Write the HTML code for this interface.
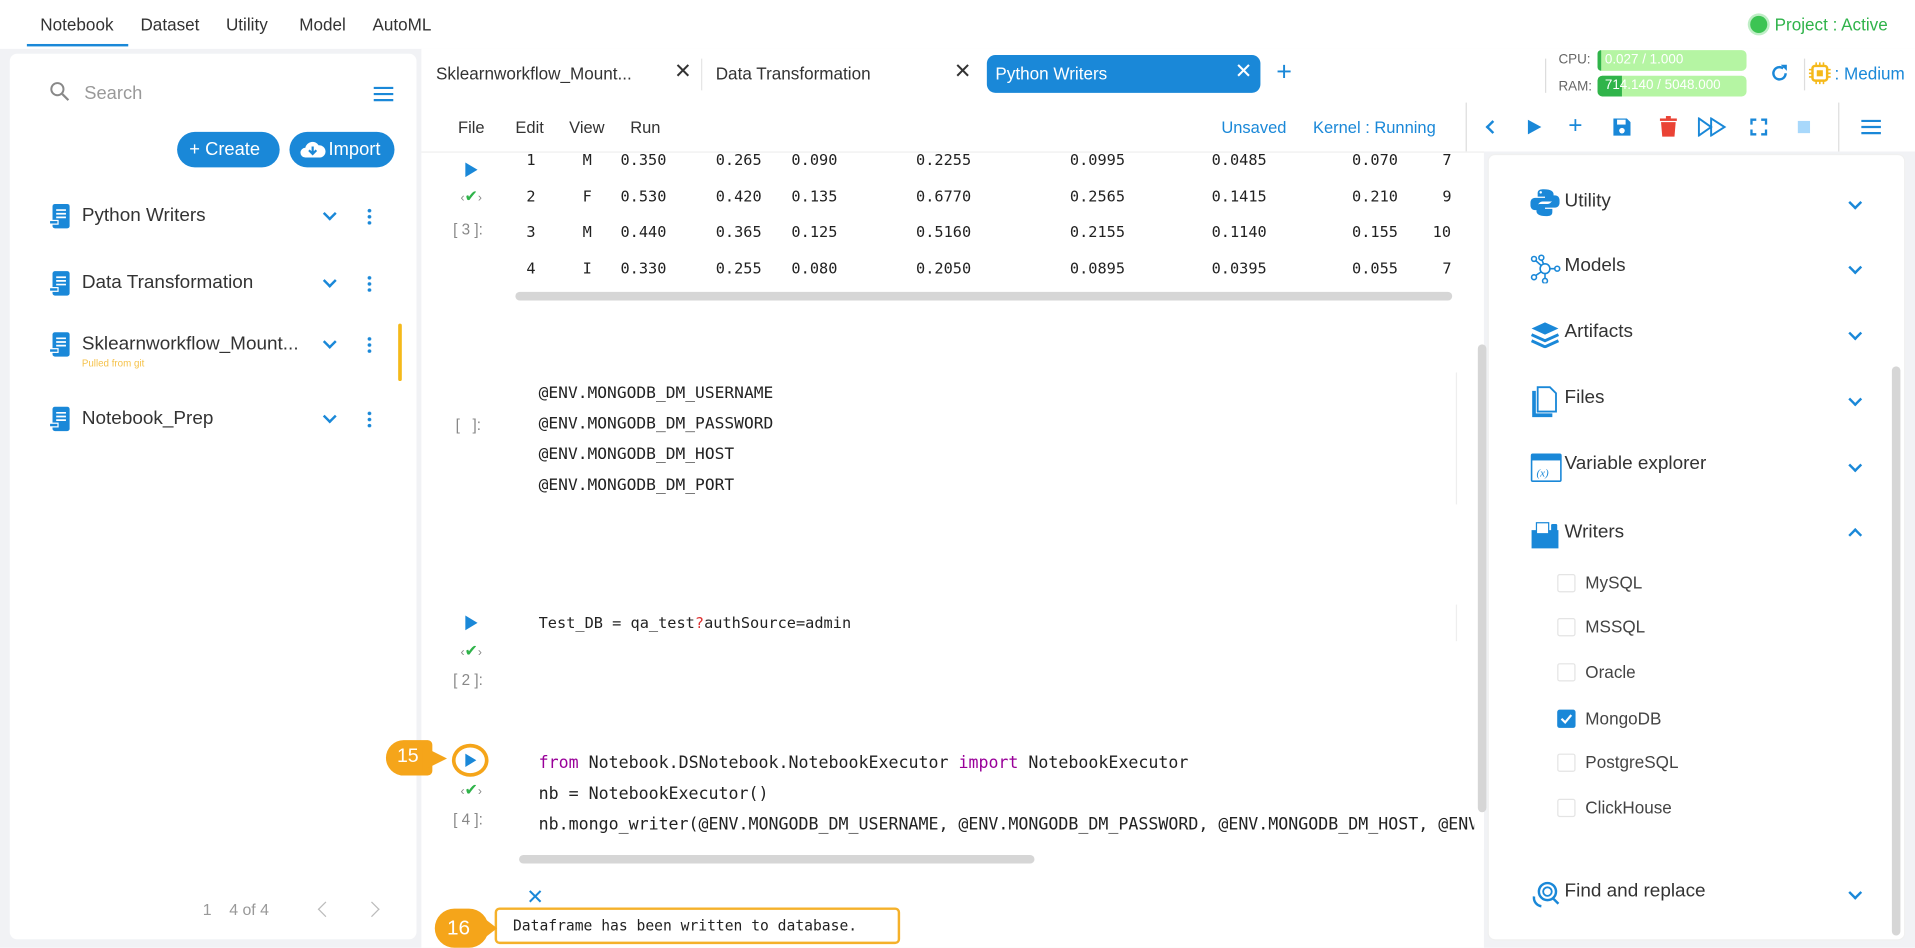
<!DOCTYPE html>
<html><head><meta charset="utf-8"><style>
*{box-sizing:border-box;margin:0;padding:0}
html,body{width:1915px;height:948px;overflow:hidden;background:#fff}
#s{position:absolute;left:0;top:0;width:1568px;height:776px;transform:scale(1.22135);transform-origin:0 0;background:#f1f2f5;font-family:"Liberation Sans",sans-serif;color:#333}
.a{position:absolute;white-space:nowrap}
.m{font-family:"DejaVu Sans Mono","Liberation Mono",monospace;font-size:12.5px;color:#222}
.blue{color:#1a88d8}
.chev{width:8px;height:8px;border-right:2px solid #1a88d8;border-bottom:2px solid #1a88d8;transform:rotate(45deg)}
.dots{width:3px;height:14px;background:radial-gradient(circle,#1a88d8 1.4px,transparent 1.6px) 0 0/3px 5px repeat-y}
.cb{width:15px;height:15px;border:1px solid #e4e4e4;border-radius:2px}
</style></head><body><div id="s">
<div class="a" style="left:0;top:0;width:1568px;height:40px;background:#fff"></div>
<div class="a" style="left:33px;top:12px;font-size:14px">Notebook</div>
<div class="a" style="left:115px;top:12px;font-size:14px">Dataset</div>
<div class="a" style="left:185px;top:12px;font-size:14px">Utility</div>
<div class="a" style="left:245px;top:12px;font-size:14px">Model</div>
<div class="a" style="left:305px;top:12px;font-size:14px">AutoML</div>
<div class="a" style="left:22px;top:36px;width:83px;height:2px;background:#1a88d8"></div>
<div class="a" style="left:1433px;top:13px;width:14px;height:14px;border-radius:50%;background:#3cc453;box-shadow:0 0 0 2px #bfeec6"></div>
<div class="a" style="left:1453px;top:12px;font-size:14px;color:#2fb34a">Project : Active</div>
<div class="a" style="left:8px;top:44px;width:333px;height:725px;background:#fff;border-radius:6px"></div>
<svg class="a" style="left:40px;top:66px" width="18" height="18"><circle cx="7" cy="7" r="5" fill="none" stroke="#888" stroke-width="1.6"/><line x1="11" y1="11" x2="16" y2="16" stroke="#888" stroke-width="1.8"/></svg>
<div class="a" style="left:69px;top:68px;font-size:15px;color:#999">Search</div>
<svg class="a" style="left:305px;top:70px" width="18" height="14"><path d="M1 2h16M1 7h16M1 12h16" stroke="#1a88d8" stroke-width="1.8"/></svg>
<div class="a" style="left:145px;top:108px;width:84px;height:29px;border-radius:15px;background:#1a88d8;color:#fff;font-size:15px;line-height:29px;padding-left:10px">+ Create</div>
<div class="a" style="left:237px;top:108px;width:86px;height:29px;border-radius:15px;background:#1a88d8;color:#fff;font-size:15px;line-height:29px;padding-left:32px">Import</div>
<svg class="a" style="left:245px;top:114px" width="22" height="17"><path d="M5 15a4 4 0 0 1 0-8a6 6 0 0 1 11-2a5 5 0 0 1 1 10z" fill="#fff"/><path d="M11 6v6M8 9l3 3l3-3" stroke="#1a88d8" stroke-width="1.8" fill="none"/></svg>
<div id="items"></div>
<div class="a" style="left:326px;top:265px;width:3px;height:47px;background:#f5b91a;border-radius:2px"></div>
<div class="a" style="left:166px;top:737px;font-size:13px;color:#999">1&nbsp;&nbsp;&nbsp;&nbsp;4 of 4</div>
<div class="a" style="left:262px;top:740px;width:9px;height:9px;border-left:1.5px solid #bbb;border-bottom:1.5px solid #bbb;transform:rotate(45deg)"></div>
<div class="a" style="left:300px;top:740px;width:9px;height:9px;border-right:1.5px solid #bbb;border-top:1.5px solid #bbb;transform:rotate(45deg)"></div>
<div class="a" style="left:345px;top:40px;width:870px;height:84px;background:#fff"></div>
<div class="a" style="left:357px;top:52px;font-size:14px">Sklearnworkflow_Mount...</div>
<div class="a" style="left:552px;top:49px;font-size:17px;color:#333">✕</div>
<div class="a" style="left:574px;top:48px;width:1px;height:26px;background:#e5e5e5"></div>
<div class="a" style="left:586px;top:52px;font-size:14px">Data Transformation</div>
<div class="a" style="left:781px;top:49px;font-size:17px">✕</div>
<div class="a" style="left:808px;top:45px;width:224px;height:31px;background:#1a88d8;border-radius:7px"></div>
<div class="a" style="left:815px;top:52px;font-size:14px;color:#fff">Python Writers</div>
<div class="a" style="left:1011px;top:49px;font-size:17px;color:#fff">✕</div>
<div class="a" style="left:1045px;top:46px;font-size:22px;color:#1a88d8">+</div>
<div class="a" style="left:375px;top:97px;font-size:13.5px">File</div>
<div class="a" style="left:422px;top:97px;font-size:13.5px">Edit</div>
<div class="a" style="left:466px;top:97px;font-size:13.5px">View</div>
<div class="a" style="left:516px;top:97px;font-size:13.5px">Run</div>
<div class="a blue" style="left:1000px;top:97px;font-size:13.5px">Unsaved</div>
<div class="a blue" style="left:1075px;top:97px;font-size:13.5px">Kernel : Running</div>
<div class="a" style="left:1200px;top:40px;width:368px;height:84px;background:#fff"></div>
<div class="a" style="left:1200px;top:84px;width:1px;height:40px;background:#ddd"></div>
<div class="a" style="left:1265px;top:48px;width:1px;height:28px;background:#ddd"></div>
<div class="a" style="left:1276px;top:43px;font-size:11px;color:#666">CPU:</div>
<div class="a" style="left:1276px;top:65px;font-size:11px;color:#666">RAM:</div>
<div class="a" style="left:1308px;top:41px;width:122px;height:17px;border-radius:4px;background:#b5f5a3"></div>
<div class="a" style="left:1308px;top:41px;width:3px;height:17px;border-radius:3px 0 0 3px;background:#30b44a"></div>
<div class="a" style="left:1314px;top:43px;font-size:11px;color:#fff">0.027 / 1.000</div>
<div class="a" style="left:1308px;top:62px;width:122px;height:17px;border-radius:4px;background:#b5f5a3"></div>
<div class="a" style="left:1308px;top:62px;width:20px;height:17px;border-radius:4px 0 0 4px;background:#30b44a"></div>
<div class="a" style="left:1314px;top:64px;font-size:11px;color:#fff">714.140 / 5048.000</div>
<svg class="a" style="left:1448px;top:51px" width="18" height="18"><path d="M14 9a5 5 0 1 1-2-4" fill="none" stroke="#1a88d8" stroke-width="2"/><path d="M10 2h5v5z" fill="#1a88d8"/></svg>
<div class="a" style="left:1477px;top:48px;width:1px;height:26px;background:#ddd"></div>
<svg class="a" style="left:1481px;top:51px" width="18" height="18"><rect x="3" y="3" width="12" height="12" rx="2" fill="none" stroke="#f5b91a" stroke-width="2"/><rect x="6.5" y="6.5" width="5" height="5" fill="#f5b91a"/><path d="M6 0v3M9 0v3M12 0v3M6 15v3M9 15v3M12 15v3M0 6h3M0 9h3M0 12h3M15 6h3M15 9h3M15 12h3" stroke="#f5b91a" stroke-width="1.3"/></svg>
<div class="a" style="left:1502px;top:52px;font-size:14px;color:#1a88d8">: Medium</div>
<div class="a" style="left:1218px;top:100px;width:8px;height:8px;border-left:2px solid #1a88d8;border-bottom:2px solid #1a88d8;transform:rotate(45deg)"></div>
<svg class="a" style="left:1249px;top:97px" width="14" height="14"><path d="M2 1l11 6l-11 6z" fill="#1a88d8"/></svg>
<div class="a" style="left:1284px;top:92px;font-size:20px;color:#1a88d8">+</div>
<svg class="a" style="left:1320px;top:96px" width="16" height="16"><path d="M1 1h11l3 3v11h-14z" fill="#1a88d8"/><rect x="4" y="2" width="7" height="4" fill="#fff"/><circle cx="8" cy="11" r="2.3" fill="#fff"/></svg>
<svg class="a" style="left:1359px;top:95px" width="14" height="17"><rect x="0" y="2" width="14" height="2" fill="#ea4335"/><rect x="5" y="0" width="4" height="2" fill="#ea4335"/><path d="M1 5h12l-1 12h-10z" fill="#ea4335"/></svg>
<svg class="a" style="left:1390px;top:96px" width="24" height="16"><path d="M1 1l10 7l-10 7zM11 1l11 7l-11 7z" fill="none" stroke="#1a88d8" stroke-width="1.6"/></svg>
<svg class="a" style="left:1433px;top:97px" width="14" height="14"><path d="M1 5V1h4M9 1h4v4M13 9v4h-4M5 13H1V9" fill="none" stroke="#1a88d8" stroke-width="2"/></svg>
<div class="a" style="left:1472px;top:99px;width:10px;height:10px;background:#a8d8fb"></div>
<div class="a" style="left:1505px;top:84px;width:1px;height:40px;background:#ddd"></div>
<svg class="a" style="left:1523px;top:97px" width="18" height="14"><path d="M1 2h16M1 7h16M1 12h16" stroke="#1a88d8" stroke-width="1.8"/></svg>
<div class="a" style="left:345px;top:124px;width:870px;height:652px;background:#fff"></div>
<div class="a" style="left:345px;top:124px;width:870px;height:1px;background:#eee"></div>
<svg class="a" style="left:380px;top:132px" width="12" height="14"><path d="M1 1l10 6l-10 6z" fill="#1a88d8"/></svg>
<div class="a" style="left:377px;top:153px;font-size:13px;color:#2fb34a"><span style="color:#888;font-size:10px">‹</span>✔<span style="color:#888;font-size:10px">›</span></div>
<div class="a" style="left:371px;top:181px;font-size:12.5px;color:#888">[ 3 ]:</div>
<div id="tbl"></div>
<div class="a" style="left:422px;top:239px;width:767px;height:7px;border-radius:4px;background:#d6d6d6"></div>
<div class="a" style="left:1192px;top:305px;width:1px;height:108px;background:#eee"></div>
<div class="a" style="left:373px;top:341px;font-size:12.5px;color:#888">[&nbsp;&nbsp;&nbsp;]:</div>
<div class="a m" style="left:441px;top:310px;line-height:25px;font-size:13.3px">@ENV.MONGODB_DM_USERNAME<br>@ENV.MONGODB_DM_PASSWORD<br>@ENV.MONGODB_DM_HOST<br>@ENV.MONGODB_DM_PORT</div>
<svg class="a" style="left:380px;top:503px" width="12" height="14"><path d="M1 1l10 6l-10 6z" fill="#1a88d8"/></svg>
<div class="a" style="left:377px;top:525px;font-size:13px;color:#2fb34a"><span style="color:#888;font-size:10px">‹</span>✔<span style="color:#888;font-size:10px">›</span></div>
<div class="a" style="left:371px;top:550px;font-size:12.5px;color:#888">[ 2 ]:</div>
<div class="a m" style="left:441px;top:502px">Test_DB = qa_test<span style="color:#d33">?</span>authSource=admin</div>
<div class="a" style="left:1192px;top:495px;width:1px;height:30px;background:#eee"></div>
<div class="a" style="left:370px;top:609px;width:30px;height:27px;border-radius:50%;border:3.5px solid #f5a51a;background:#fff"></div>
<svg class="a" style="left:380px;top:616px" width="11" height="13"><path d="M1 1l9 5.5l-9 5.5z" fill="#1a88d8"/></svg>
<div class="a" style="left:316px;top:606px;width:38px;height:29px;border-radius:15px 4px 4px 15px;background:#f5a51a"></div>
<div class="a" style="left:346px;top:611px;width:0;height:0;border-top:10px solid transparent;border-bottom:10px solid transparent;border-left:20px solid #f5a51a"></div>
<div class="a" style="left:325px;top:611px;font-size:16px;color:#fff">15</div>
<div class="a" style="left:377px;top:639px;font-size:13px;color:#2fb34a"><span style="color:#888;font-size:10px">‹</span>✔<span style="color:#888;font-size:10px">›</span></div>
<div class="a" style="left:371px;top:664px;font-size:12.5px;color:#888">[ 4 ]:</div>
<div class="a m" style="left:441px;top:613px;line-height:25px;font-size:13.6px"><span style="color:#909">from</span> Notebook.DSNotebook.NotebookExecutor <span style="color:#909">import</span> NotebookExecutor<br>nb = NotebookExecutor()<br>nb.mongo_writer(@ENV.MONGODB_DM_USERNAME, @ENV.MONGODB_DM_PASSWORD, @ENV.MONGODB_DM_HOST, @ENV</div>
<div class="a" style="left:1207px;top:600px;width:8px;height:95px;background:#fff"></div>
<div class="a" style="left:1210px;top:282px;width:7px;height:383px;border-radius:4px;background:#d6d6d6"></div>
<div class="a" style="left:425px;top:700px;width:422px;height:7px;border-radius:4px;background:#d6d6d6"></div>
<div class="a" style="left:431px;top:725px;font-size:17px;color:#1a88d8">✕</div>
<div class="a" style="left:405px;top:743px;width:332px;height:30px;border:2px solid #f5b12a;border-radius:4px;background:#fff"></div>
<div class="a m" style="left:420px;top:751px;font-size:12px">Dataframe has been written to database.</div>
<div class="a" style="left:356px;top:744px;width:44px;height:32px;border-radius:16px;background:#f5a51a"></div>
<div class="a" style="left:394px;top:750px;width:0;height:0;border-top:10px solid transparent;border-bottom:10px solid transparent;border-left:13px solid #f5a51a"></div>
<div class="a" style="left:366px;top:750px;font-size:17px;color:#fff">16</div>
<div class="a" style="left:1218px;top:126px;width:342px;height:644px;background:#fff;border-radius:6px;border:1px solid #f0f0f0"></div>
<div class="a" style="left:1549px;top:300px;width:7px;height:466px;background:#d6d6d6;border-radius:4px"></div>
<div id="rp"></div>
<svg class="a" style="left:1253px;top:154px" width="24" height="24"><path d="M11 1c-5 0-5 2-5 4v2h6v1H4c-3 0-4 2-4 5s1 5 4 5h2v-3c0-2 2-4 4-4h6c2 0 3-1 3-3V5c0-2-2-4-8-4z" fill="#1a88d8"/><path d="M13 23c5 0 5-2 5-4v-2h-6v-1h8c3 0 4-2 4-5s-1-5-4-5h-2v3c0 2-2 4-4 4H8c-2 0-3 1-3 3v3c0 2 2 4 8 4z" fill="#1a88d8"/><circle cx="8.5" cy="3.5" r="1" fill="#fff"/></svg>
<svg class="a" style="left:1252px;top:208px" width="26" height="24"><g fill="none" stroke="#1a88d8" stroke-width="1.3"><circle cx="13" cy="12" r="4"/><circle cx="4" cy="4" r="2"/><circle cx="10" cy="3" r="2"/><circle cx="23" cy="12" r="2"/><circle cx="4" cy="19" r="2"/><circle cx="13" cy="22" r="2"/><path d="M5.5 5.5l4.5 4M10.5 5l1.5 3.5M17 12h4M5.5 17.5l4.5-3M13 16v4"/></g></svg>
<svg class="a" style="left:1253px;top:263px" width="24" height="22"><path d="M12 1l11 5l-11 5l-11-5z" fill="#1a88d8"/><path d="M1 11l11 5l11-5M1 16l11 5l11-5" fill="none" stroke="#1a88d8" stroke-width="2.4"/></svg>
<svg class="a" style="left:1254px;top:316px" width="22" height="26"><path d="M2 4v20h15" fill="none" stroke="#1a88d8" stroke-width="3"/><path d="M5 1h10l5 5v15H5z" fill="#fff" stroke="#1a88d8" stroke-width="1.5"/></svg>
<svg class="a" style="left:1253px;top:371px" width="26" height="24"><rect x="1" y="1" width="24" height="22" rx="1" fill="#fff" stroke="#1a88d8" stroke-width="1.3"/><rect x="1" y="1" width="24" height="5" fill="#1a88d8"/><text x="5" y="19" font-size="9" font-style="italic" fill="#1a88d8" font-family="Liberation Serif">(x)</text></svg>
<svg class="a" style="left:1253px;top:426px" width="24" height="24"><path d="M1 8h22v15H1z" fill="#1a88d8"/><rect x="5" y="2" width="10" height="9" fill="#fff" stroke="#1a88d8"/><rect x="17" y="3" width="5" height="6" rx="1" fill="#1a88d8"/></svg>
<svg class="a" style="left:1254px;top:720px" width="24" height="24"><circle cx="13" cy="10" r="7" fill="none" stroke="#1a88d8" stroke-width="2"/><circle cx="13" cy="10" r="3.5" fill="none" stroke="#1a88d8" stroke-width="1.5"/><path d="M17 15l5 5M2 14a7 7 0 0 0 6 8" fill="none" stroke="#1a88d8" stroke-width="2"/></svg>
<div class="a" style="left:1275px;top:581px;width:15px;height:15px;border-radius:2px;background:#1a88d8"></div>
<svg class="a" style="left:1275px;top:581px" width="15" height="15"><path d="M3.5 7.5l3 3l5-6" fill="none" stroke="#fff" stroke-width="1.8"/></svg>
</div>
<script>
var h='';
[['Python Writers',177],['Data Transformation',232],['Sklearnworkflow_Mount...',282],['Notebook_Prep',343]].forEach(function(it){
var y=it[1];
h+='<svg class="a" style="left:40px;top:'+(y-11)+'px" width="18" height="22"><rect x="3" y="1" width="14" height="20" rx="2" fill="#1a88d8"/><path d="M6 6h8M6 9h8M6 12h8" stroke="#fff" stroke-width="1.4"/><rect x="0" y="14" width="8" height="4" fill="#fff"/><rect x="1" y="15" width="6" height="2" fill="#1a88d8"/></svg>';
h+='<div class="a" style="left:67px;top:'+(y-9)+'px;font-size:15.5px;color:#333">'+it[0]+'</div>';
h+='<div class="a chev" style="left:266px;top:'+(y-6)+'px"></div><div class="a dots" style="left:301px;top:'+(y-7)+'px"></div>';
});
h+='<div class="a" style="left:67px;top:293px;font-size:8px;color:#f5c24a">Pulled from git</div>';
document.getElementById('items').innerHTML=h;
var rows=[['1','M','0.350','0.265','0.090','0.2255','0.0995','0.0485','0.070','7'],['2','F','0.530','0.420','0.135','0.6770','0.2565','0.1415','0.210','9'],['3','M','0.440','0.365','0.125','0.5160','0.2155','0.1140','0.155','10'],['4','I','0.330','0.255','0.080','0.2050','0.0895','0.0395','0.055','7']];
var xs=[431,477,508,586,648,750,876,992,1107,1181],t='';
rows.forEach(function(r,i){r.forEach(function(c,j){var x=xs[j];if(j==9&&c.length>1)x-=8;t+='<div class="a m" style="left:'+x+'px;top:'+(123+i*29.5)+'px">'+c+'</div>';});});
document.getElementById('tbl').innerHTML=t;
var r='';
[['Utility',166,0],['Models',219,0],['Artifacts',273,0],['Files',327,0],['Variable explorer',381,0],['Writers',437,1],['Find and replace',731,0]].forEach(function(it){
r+='<div class="a" style="left:1281px;top:'+(it[1]-10)+'px;font-size:15.5px;color:#333">'+it[0]+'</div>';
if(it[2])r+='<div class="a" style="left:1515px;top:'+(it[1]-3)+'px;width:8px;height:8px;border-left:2px solid #1a88d8;border-top:2px solid #1a88d8;transform:rotate(45deg)"></div>';
else r+='<div class="a chev" style="left:1515px;top:'+(it[1]-4)+'px"></div>';
});
[['MySQL',478],['MSSQL',514],['Oracle',551],['MongoDB',589],['PostgreSQL',625],['ClickHouse',662]].forEach(function(it){
r+='<div class="a cb" style="left:1275px;top:'+(it[1]-8)+'px"></div><div class="a" style="left:1298px;top:'+(it[1]-9)+'px;font-size:14px;color:#444">'+it[0]+'</div>';});
document.getElementById('rp').innerHTML=r;
</script>
</body></html>
